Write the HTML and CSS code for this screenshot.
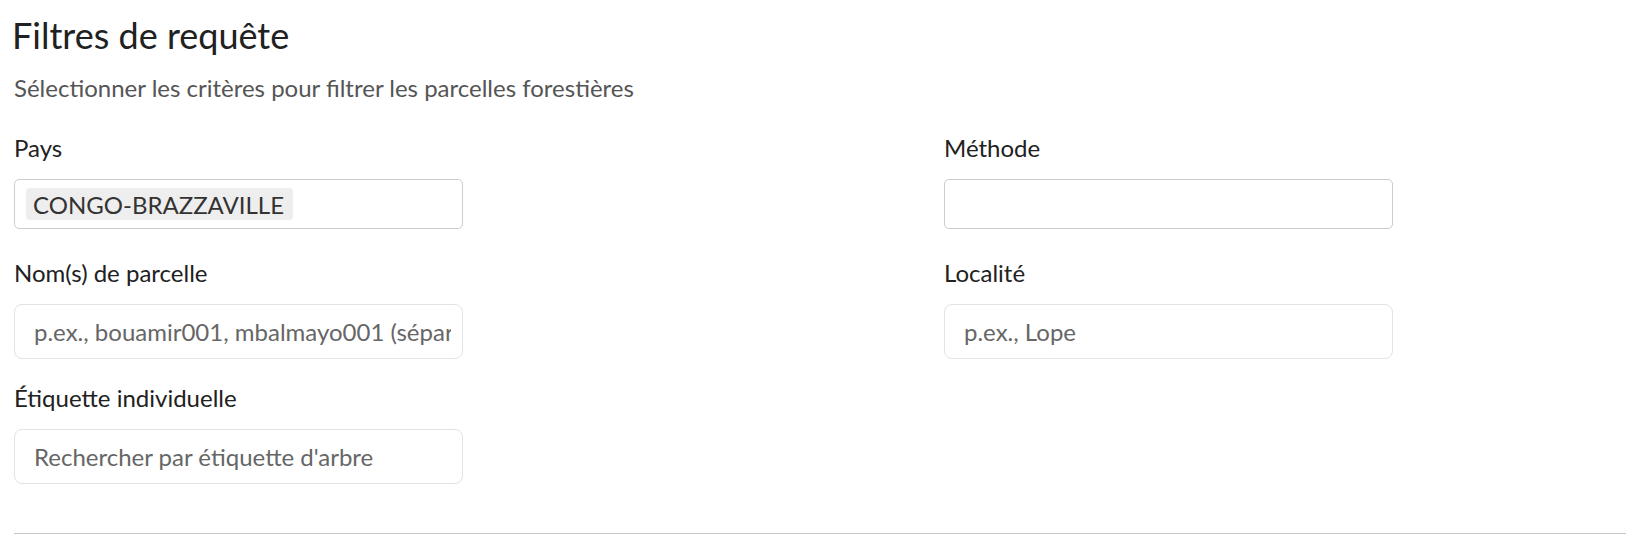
FILE: index.html
```html
<!DOCTYPE html>
<html lang="fr">
<head>
<meta charset="utf-8">
<title>Filtres de requête</title>
<link rel="stylesheet" href="styles.css">
</head>
<body>
<section class="panel">
  <h2 class="title">Filtres de requête</h2>
  <p class="subtitle">Sélectionner les critères pour filtrer les parcelles forestières</p>
  <div class="grid">
    <div class="field">
      <label class="label">Pays</label>
      <div class="select">
        <span class="chip">CONGO-BRAZZAVILLE</span>
      </div>
    </div>
    <div class="field">
      <label class="label">Méthode</label>
      <div class="select"></div>
    </div>
    <div class="field">
      <label class="label">Nom(s) de parcelle</label>
      <input class="input" type="text" placeholder="p.ex., bouamir001, mbalmayo001 (séparés par des virgules)">
    </div>
    <div class="field">
      <label class="label">Localité</label>
      <input class="input" type="text" placeholder="p.ex., Lope">
    </div>
    <div class="field">
      <label class="label">Étiquette individuelle</label>
      <input class="input" type="text" placeholder="Rechercher par étiquette d'arbre">
    </div>
  </div>
  <hr class="divider">
</section>
</body>
</html>
```
FILE: styles.css
```css
* { box-sizing: border-box; }
html, body { margin: 0; padding: 0; background: #fff; }
body { font-family: Lato, "Noto Sans", sans-serif; color: #222; }

.panel {
  padding: 14px 0 0 14px;
}

.title {
  margin: 0 0 0 -2px;
  font-size: 36px;
  font-weight: 400;
  line-height: 43px;
  color: #212121;
}

.subtitle {
  margin: 16px 0 0 0;
  font-size: 24px;
  line-height: 29px;
  color: #555;
}

.grid {
  margin-top: 31px;
  display: grid;
  grid-template-columns: 1fr 1fr;
  column-gap: 248px;
  row-gap: 24px;
  align-items: start;
}

.field {
  display: flex;
  flex-direction: column;
  gap: 17px;
}

.label {
  display: block;
  font-size: 24px;
  line-height: 29px;
  color: #212121;
}

.select {
  width: 449px;
  height: 50px;
  margin-bottom: 5px;
  border: 1px solid #cccccc;
  border-radius: 5px;
  padding: 0 11px;
  display: flex;
  align-items: center;
}

.chip {
  background: #eeeeee;
  border-radius: 4px;
  padding: 0 9px 0 7px;
  height: 32px;
  display: inline-flex;
  align-items: center;
  font-size: 24px;
  color: #333;
}

.input {
  width: 449px;
  height: 55px;
  border: 1px solid #e2e2e8;
  border-radius: 8px;
  padding: 0 11px 0 19px;
  font-family: Lato, "Noto Sans", sans-serif;
  font-size: 24px;
  color: #222;
  background: #fff;
  outline: none;
}
.input::placeholder { color: #666; opacity: 1; }

.divider {
  margin: 49px 0 0 0;
  border: 0;
  border-top: 1px solid #c8c8c8;
}
```
